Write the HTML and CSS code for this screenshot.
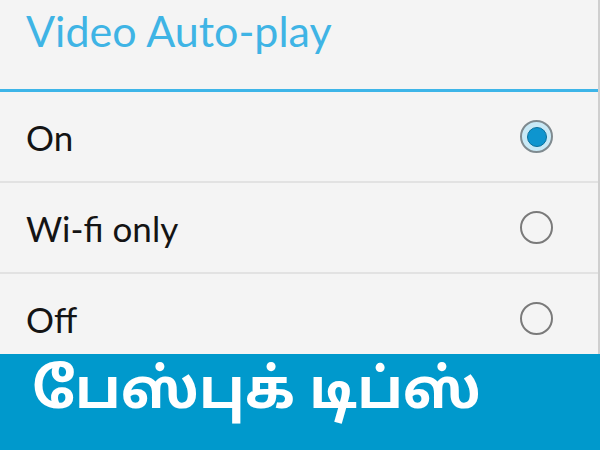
FILE: index.html
```html
<!DOCTYPE html>
<html>
<head>
<meta charset="utf-8">
<link rel="stylesheet" href="styles.css">
</head>
<body>
<div class="screen">
  <div class="panel">
    <div class="title">Video Auto-play</div>
    <div class="options">
      <div class="row"><span class="label">On</span><span class="radio checked"><span class="dot"></span></span></div>
      <div class="row"><span class="label">Wi-fi only</span><span class="radio"></span></div>
      <div class="row"><span class="label">Off</span><span class="radio"></span></div>
    </div>
  </div>
  <div class="banner">பேஸ்புக் டிப்ஸ்</div>
</div>
</body>
</html>
```
FILE: styles.css
```css
* { box-sizing: border-box; }
html, body { margin: 0; padding: 0; }
body { width: 600px; height: 450px; overflow: hidden; background: #f4f4f4; }
.screen { display: flex; flex-direction: column; width: 600px; height: 450px; }
.panel { flex: 0 0 354px; height: 354px; overflow: hidden; border-right: 2px solid #cfcfcf; background: #f4f4f4; }
.title {
  height: 92px;
  padding: 5px 0 0 26px;
  font-family: Lato, sans-serif;
  font-size: 43px;
  color: #3fb4e5;
  border-bottom: 3px solid #3db5e8;
}
.options { display: flex; flex-direction: column; }
.row {
  height: 91px;
  flex: 0 0 91px;
  display: flex;
  align-items: center;
  justify-content: space-between;
  padding: 0 45px 0 26px;
  border-bottom: 2px solid #e2e2e2;
}
.label { font-family: Lato, sans-serif; font-size: 35px; color: #141414; }
.radio {
  width: 33px; height: 33px; border-radius: 50%;
  border: 2px solid #7a7a7a;
  display: flex; align-items: center; justify-content: center;
}
.radio.checked { background: #c8e9f6; border-color: #7f8a8f; }
.dot { width: 20px; height: 20px; border-radius: 50%; background: #0e95cf; border: 1px solid #0a6f9a; }
.banner {
  flex: 1;
  background: #0099cc;
  color: #fff;
  font-family: "Noto Sans Tamil", "Lohit Tamil", "Noto Sans", sans-serif;
  font-weight: bold;
  font-size: 55px;
  text-align: left;
  line-height: 80px;
  padding-left: 32px;
}
```
